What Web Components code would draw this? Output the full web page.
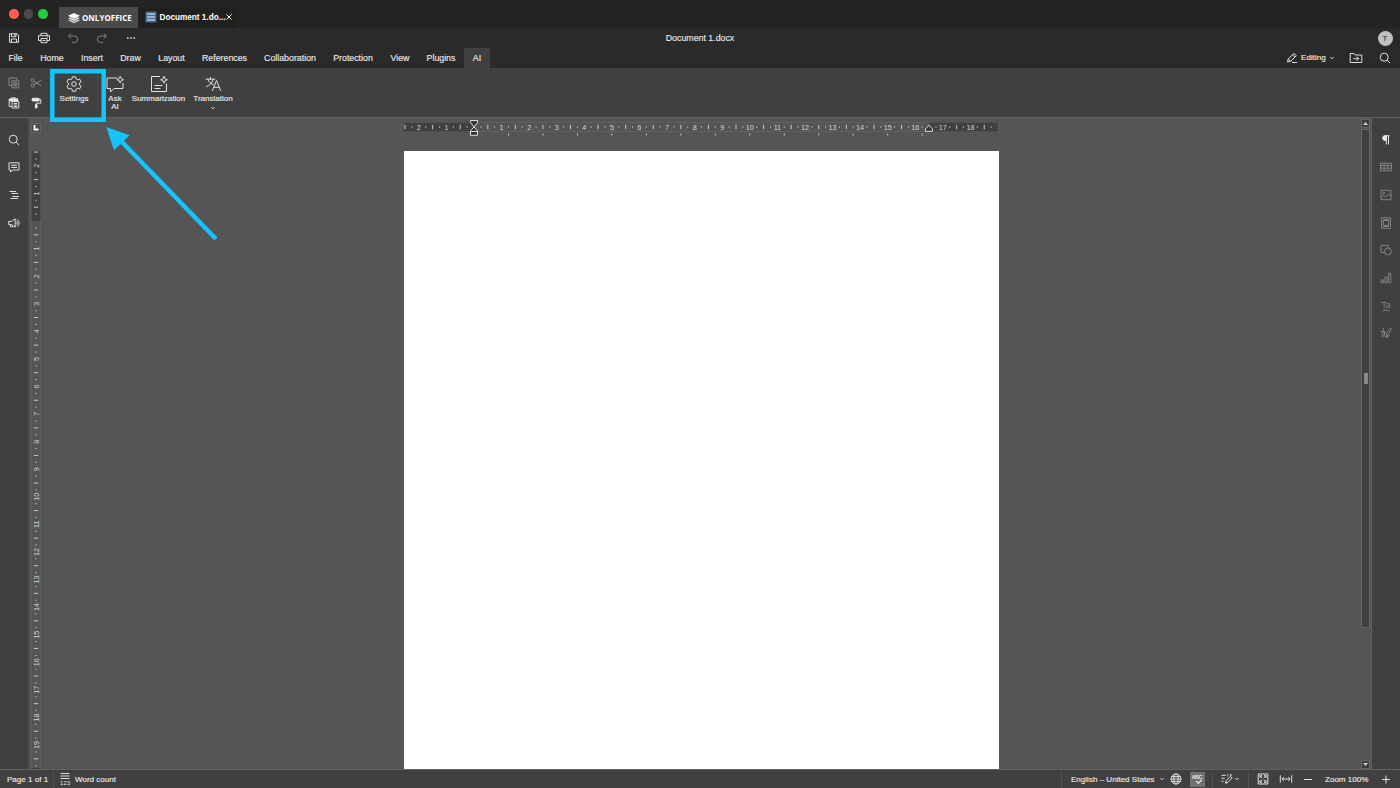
<!DOCTYPE html>
<html lang="en">
<head>
<meta charset="utf-8">
<title>Document 1.docx</title>
<style>
html, body {
  margin: 0;
  height: 100%;
  overflow: hidden;
}

body {
  --bar: #404040;
  --header: #2a2a2a;
  --canvas: #555555;
  --line: #616161;
  --text: #e8e8e8;
  --accent: #14c4fb;
  font-family: "Liberation Sans", Arial, sans-serif;
  font-size: 8.8px;
  color: var(--text);
  -webkit-text-stroke: .15px;
}
</style>
</head>
<body>
<de-app></de-app>
<script>
// every icon is drawn around its own centre, 1 unit = 1px
const icons = {
  save: '<path d="M-4-4.300H3L4.500-2.800V4.300H-4.500V-4.300ZM-2.500-4.300V-1.300H2V-4.300M-2.500 4.300V1H2.500V4.300M.7-3.800V-2"/>',
  print: '<path d="M-3-2.500V-4.700H3V-2.500M-3 2.500H-5.500V-2.300H5.500V2.500H3M-3 .5H3V4.700H-3ZM-1.500 2.500H1.500M3-.9H4"/>',
  undo: '<path d="M-1.800-4.500L-4.500-2L-1.800.5M-4.500-2H1.500A3.200 3.200 0 0 1 1.500 4.400H-1"/>',
  redo: '<path d="M1.800-4.500L4.500-2L1.800.5M4.500-2H-1.500A3.200 3.200 0 0 0-1.500 4.400H1"/>',
  dots: '<path d="M-4-.8h1.600v1.600h-1.600zM-.8-.8h1.600v1.600h-1.600zM2.400-.8h1.600v1.600h-1.600z" fill="currentColor" stroke="none"/>',
  copy: '<path d="M-2 2.500H-5V-5H3V-3"/><path d="M-2.200-2.200H4.800V4.800H-2.200Z"/><path d="M-.5-.5H3V3H-.5Z" fill="currentColor" opacity=".7"/>',
  cut: '<circle cx="-3.500" cy="-2.600" r="1.500"/><circle cx="-3.500" cy="2.600" r="1.500"/><path d="M-2.200-1.800L5.300 2.800M-2.200 1.800L5.300-2.800"/>',
  paste: '<path d="M-2.500 3.500H-4.800V-4H3.800V-2.300M-2.300-4V-5.200H1.300V-4"/><path d="M-4.500-4H3.500V-2H-4.500Z" fill="currentColor"/><path d="M-2-1.500H4.800V5H-2ZM-.3.500H3.200M-.3 2H3.200M-.3 3.500H3.200"/>',
  format: '<path d="M-3.500-4.700H3V-2H-3.500Z" fill="currentColor"/><path d="M3-3.400H4.800V.2H.2V1.500M-4.700-3.400H-3.500"/><path d="M-.6 1.500H1V5H-.6Z" fill="currentColor"/>',
  gear: '<path d="M-1.600-7.200H1.600L2-5.200L3.500-4.300L5.500-5L7.100-2.200L5.500-.9V.9L7.100 2.200L5.500 5L3.500 4.300L2 5.200L1.600 7.200H-1.600L-2 5.200L-3.500 4.300L-5.500 5L-7.100 2.200L-5.500.9V-.9L-7.100-2.200L-5.500-5L-3.500-4.300L-2-5.200Z" stroke-linejoin="round"/><circle r="2.300"/>',
  ask: '<path d="M2.500-6H-8V4.500H-4.500V8L-1 4.500H8V-1M5.200-7.700L6.200-5.300L8.500-4.300L6.200-3.300L5.200-1L4.200-3.300L1.900-4.300L4.200-5.300Z"/>',
  summary: '<path d="M1-7.500H-7.500V7.500H7.500V-.5M5-7.700L6-5.200L8.400-4.200L6-3.200L5-.8L4-3.200L1.600-4.200L4-5.200ZM-4.500 1.500H3.500M-4.500 4.500H1.500"/>',
  translate: '<path d="M-7.300-4.800H2.200M-2.500-7V-4.800M.2-4.800C-.7-1-3.500 1.500-7 2.800M-5-4.800C-4-1.700-2-.2.700.8M-.8 7L3.500-3.500L7.800 7M.8 3.300H6.200"/>',
  pencil: '<path d="M-4.500 4L-3.700.8L2-4.500L4.300-2.300L-1.300 3.300ZM-3.700.8L-1.300 3.300M.6-3.200L2.800-1M0 4.500H5"/>',
  chevron: '<path d="M-1.700-.9L0 .8L1.700-.9"/>',
  folder: '<path d="M-5.800 4.500V-4.500H-2L-.9-3H5.800V4.500ZM-2.700.7H2.600M.6-1.400L2.700.7L.6 2.800"/>',
  search: '<circle cx="-.8" cy="-.8" r="4"/><path d="M2.200 2.200L5.200 5.200"/>',
  comment: '<path d="M-5-4.200H5V3H-1L-3.500 5V3H-5ZM-2.800-1.700H3M-2.800.5H3"/>',
  headings: '<path d="M-4.500-3.500H2M-2.500-1.500H4M-1.500 1.500H5M-3.500 3.500H4"/>',
  speaker: '<path d="M-5.300-1.600H-2.500L1.200-4.200V4.200L-2.500 1.600H-5.300ZM-3.500 1.600V3.800H-1.500V2.200M2.700-1.600Q3.800 0 2.700 1.600M3.200-3.700Q7 0 3.200 3.700"/>',
  pilcrow: '<path d="M.2-4.500H-.8A2.500 2.500 0 0 0-.8.500H.2Z" fill="currentColor"/><path d="M.4 4.500V-4.300H3.500M2.500-4.300V4.500"/>',
  table: '<path d="M-5.500-3.800H5.500V3.800H-5.500ZM-5.500-1.500H5.500M-5.500 1.200H5.500M-1.800-3.800V3.800M1.800-3.800V3.800"/>',
  image: '<path d="M-5-4.700H5V4.700H-5ZM-5 2.500L-2.500.3L-.5 2.200L2.500-1L5 1.300"/><circle cx="-2.300" cy="-2" r=".8"/>',
  header: '<path d="M-4.500-5.300H4.500V5.300H-4.500ZM-2.600-3.500H2.600V3.500H-2.600ZM-2.600-2.500H2.600M-2.600 2.500H2.600"/>',
  shape: '<path d="M-1.800 2.500H-5V-4.700H2.300V-2"/><circle cx="1.800" cy="1.500" r="3.500"/>',
  chart: '<path d="M-4.800 1.800H-2.600V4.800H-4.800ZM-1.100-1H1.100V4.800H-1.100ZM2.600-4.700H4.800V4.800H2.600Z"/>',
  textart: '<text y="2" font-size="8.500">Ta</text><path d="M-3.500 5Q0 2.600 3.500 5"/>',
  sign: '<path d="M-5.500-1.500H-1M-3.500-5Q-1.500-5-3.300 0Q-4.800 5-2.800 3.500Q-1.500 2-1-1Q-2.300 4-.2 3.500M.2 4.300L1-.5L4-4.800L5.600-3.500L2.700.8ZM1 4.500L4 2"/>',
  count: '<path d="M-4.500-5.500H4.500M-4.500-3H4.500M-4.500-.5H4.500"/><text y="5.700" font-size="5.500" textLength="10">123</text>',
  globe: '<circle r="5"/><ellipse rx="2.200" ry="5"/><path d="M-5 0H5M-4.400-2.400H4.400M-4.400 2.400H4.400"/>',
  spell: '<text y="0" font-size="5.500" font-weight="bold" textLength="11">ABC</text><path d="M-.8 2L1.200 4.300L5 .8" stroke-width="1.200"/>',
  track: '<path d="M-5.500-3.700H-1M-5.500-.7H-2.300M-5.500 2.300H-3.500M-1.500 4L-.8 1.500L3.500-2.700L5.200-1L.8 3.400ZM-1.500 4L.8 3.400M.2-2.800L1.300-3.900L.5-4.700M3-4.700L4.500-3.500M4.500-4.700L3-3.500"/>',
  fitpage: '<path d="M-4.800-5H4.800V5H-4.800ZM-3-1.200V-3.300H-1M3-1.200V-3.300H1M-3 1.200V3.300H-1M3 1.200V3.300H1M-3-3.300L-.8-.8M3-3.300L.8-.8M-3 3.300L-.8.8M3 3.300L.8.8"/>',
  fitwidth: '<path d="M-5.700-3.700V3.700M5.700-3.700V3.700M-4 0H4M-2.200-1.900L-4.100 0L-2.200 1.900M2.200-1.900L4.100 0L2.200 1.900"/>',
  minus: '<path d="M-4 .5H4"/>',
  plus: '<path d="M-4 .5H4M0-3.500V4.500"/>',
  close: '<path d="M-2.600-2.600L2.600 2.600M-2.600 2.600L2.600-2.600"/>',
  logo: '<g fill="#fff" stroke="none"><path d="M-6-2.200L0-5L6-2.200L0 .7Z"/><path d="M-6 .2L-4-.8L0 1.200L4-.8L6 .2L0 3Z" opacity=".85"/><path d="M-6 2.400L-4 1.500L0 3.500L4 1.500L6 2.400L0 5.300Z" opacity=".7"/></g>',
  doc: '<path d="M-5.500-5.500H5.500V5.500H-5.500Z" fill="#446995" stroke="none"/><path d="M-4-3H4M-4 0H4M-4 3H4" stroke="#fff" stroke-width="1"/>',
};

class DeIcon extends HTMLElement {
  constructor() {
    super();
    this.attachShadow({ mode: 'open' });
  }

  connectedCallback() {
    this.shadowRoot.innerHTML = `
      <style>
      :host { display: block; flex: none; width: 18px; height: 18px; }
      svg { display: block; width: 100%; height: 100%; fill: none; stroke: currentColor; stroke-width: .95; }
      text { fill: currentColor; stroke: none; text-anchor: middle; }
      </style>
      <svg viewBox="-9 -9 18 18">${icons[this.getAttribute('name')]}</svg>`;
  }
}

const titleTemplate = document.createElement('template');
titleTemplate.innerHTML = `
<style>
:host {
  display: flex;
  height: 28px;
  flex: none;
  background: #242422;
  align-items: flex-end;
}

.lights {
  display: flex;
  gap: 5px;
  width: 50px;
  height: 28px;
  padding-left: 9px;
  align-items: center;
}

.lights i {
  width: 9.600px;
  height: 9.600px;
  border-radius: 50%;
  background: #ff5f57;
}

.lights i:nth-child(2) { background: #4b4b4a; }
.lights i:nth-child(3) { background: #28c840; }

.brand, .file {
  display: flex;
  align-items: center;
  height: 21px;
  box-sizing: border-box;
  white-space: nowrap;
  color: #fff;
  -webkit-text-stroke: 0;
}

.brand {
  width: 79px;
  margin-right: 1px;
  padding-left: 5.500px;
  background: #4a4a49;
  font: bold 8px "Open Sans", sans-serif;
}

.brand span { margin-left: -.5px; }

.file {
  width: 97px;
  padding: 0 0 1px 2.500px;
  background: #20201f;
  font-weight: bold;
  font-size: 8.200px;
}

.file span { width: 60.500px; }
</style>
<div class="lights"><i></i><i></i><i></i></div>
<div class="brand"><de-icon name="logo"></de-icon><span>ONLYOFFICE</span></div>
<div class="file"><de-icon name="doc"></de-icon><span>Document 1.do...</span><de-icon name="close"></de-icon></div>
`;

class DeTitle extends HTMLElement {
  constructor() {
    super();
    this.attachShadow({ mode: 'open' }).appendChild(titleTemplate.content.cloneNode(true));
  }
}

const headerTemplate = document.createElement('template');
headerTemplate.innerHTML = `
<style>
:host {
  display: block;
  flex: none;
  height: 40px;
  background: var(--header);
}

.quick {
  display: grid;
  grid-template-columns: 1fr auto 1fr;
  height: 20px;
  align-items: center;
}

.quick div { display: flex; padding-left: 5px; }
.quick div de-icon { margin-right: 11.600px; }
.quick .off { color: #858585; }

.user {
  justify-self: end;
  margin-right: 7.500px;
  width: 15px;
  height: 15px;
  border-radius: 50%;
  background: #c0c0c0;
  color: #333;
  font-size: 7px;
  line-height: 15px;
  text-align: center;
}

.menu { display: flex; height: 20px; line-height: 20px; }
.menu span { text-align: center; }
.menu .on { background: var(--bar); }

.right {
  display: flex;
  align-items: center;
  margin-left: auto;
  padding-right: 6px;
  font-size: 8.100px;
}
</style>
<div class="quick">
  <div>
    <de-icon name="save"></de-icon><de-icon name="print"></de-icon><de-icon class="off" name="undo"></de-icon><de-icon class="off" name="redo" style="margin-left:-1px"></de-icon><de-icon name="dots"></de-icon>
  </div>
  <span>Document 1.docx</span>
  <span class="user">T</span>
</div>
<div class="menu">
  <span style="width:31px">File</span>
  <span style="width:42px">Home</span>
  <span style="width:38px">Insert</span>
  <span style="width:39px">Draw</span>
  <span style="width:43px">Layout</span>
  <span style="width:63px">References</span>
  <span style="width:68px">Collaboration</span>
  <span style="width:58px">Protection</span>
  <span style="width:36px">View</span>
  <span style="width:46px">Plugins</span>
  <span style="width:26px" class="on">AI</span>
  <div class="right">
    <de-icon name="pencil"></de-icon><span style="width:24px">Editing</span><de-icon name="chevron" style="margin-left:-2px"></de-icon>
    <de-icon name="folder" style="margin:0 11px 0 6px"></de-icon><de-icon name="search"></de-icon>
  </div>
</div>
`;

class DeHeader extends HTMLElement {
  constructor() {
    super();
    this.attachShadow({ mode: 'open' }).appendChild(headerTemplate.content.cloneNode(true));
  }
}

// big ribbon button: icon above, slotted caption below
class DeButton extends HTMLElement {
  constructor() {
    super();
    this.attachShadow({ mode: 'open' });
  }

  connectedCallback() {
    this.shadowRoot.innerHTML = `
      <style>
      :host {
        display: flex;
        flex-direction: column;
        align-items: center;
        padding-top: 7px;
        font-size: 8px;
        line-height: 8px;
        text-align: center;
      }
      .caption { margin-top: 2px; white-space: nowrap; }
      </style>
      <de-icon name="${this.getAttribute('icon')}"></de-icon>
      <div class="caption"><slot></slot></div>`;
  }
}

const toolbarTemplate = document.createElement('template');
toolbarTemplate.innerHTML = `
<style>
:host {
  display: flex;
  flex: none;
  height: 50px;
  box-sizing: border-box;
  border-bottom: 1px solid var(--line);
  background: var(--bar);
}

.clip {
  display: grid;
  grid-template-columns: 22px 22px;
  grid-auto-rows: 20px;
  width: 43px;
  padding: 5px 0 0 5px;
  align-items: center;
}

.clip .off { color: #8a8a8a; }
.sep { width: 1px; height: 38px; margin: 5px 4.500px 0 -3px; background: #4c4c4c; }
</style>
<div class="clip">
  <de-icon class="off" name="copy"></de-icon><de-icon class="off" name="cut"></de-icon>
  <de-icon name="paste"></de-icon><de-icon name="format"></de-icon>
</div>
<de-button icon="gear" style="width:52px">Settings</de-button>
<i class="sep"></i>
<de-button icon="ask" style="width:25px">Ask<br>AI</de-button>
<de-button icon="summary" style="width:62px">Summarization</de-button>
<de-button icon="translate" style="width:47px">Translation<de-icon name="chevron" style="margin:-4px auto"></de-icon></de-button>
`;

class DeToolbar extends HTMLElement {
  constructor() {
    super();
    this.attachShadow({ mode: 'open' }).appendChild(toolbarTemplate.content.cloneNode(true));
  }
}

class DeSide extends HTMLElement {
  constructor() {
    super();
    this.attachShadow({ mode: 'open' });
    this.shadowRoot.innerHTML = `
      <style>
      :host {
        display: flex;
        flex-direction: column;
        flex: none;
        box-sizing: border-box;
        width: 28px;
        padding: 12.500px 0 0 5px;
        gap: 9.700px;
        background: var(--bar);
      }
      </style>
      <slot></slot>`;
  }
}

const CM = 27.58;

/**
 * Ruler in centimetres. Attributes: length, zero (px of the 0 mark),
 * end (px where the right margin starts), vertical
 */
class DeRuler extends HTMLElement {
  constructor() {
    super();
    this.attachShadow({ mode: 'open' });
  }

  connectedCallback() {
    const vertical = this.hasAttribute('vertical');
    const length = Number(this.getAttribute('length'));
    const zero = Number(this.getAttribute('zero'));
    const end = Number(this.getAttribute('end'));
    // the vertical ruler is the same drawing with its axes swapped
    const flip = vertical ? ' scale(-1 1)' : '';
    let marks = '';

    for (let q = -10; q < 90; q += 1) {
      const x = zero + (q * CM) / 4;
      if (x > 0 && x < length - 2 && q !== 0) {
        if (q % 4 === 0) {
          marks += `<text transform="translate(${x} 7.500)${flip}">${Math.abs(q / 4)}</text>`;
        } else if (q % 2 === 0) {
          marks += `<path d="M${x} 2.800V7.200"/>`;
        } else {
          marks += `<path d="M${x} 4.300V5.700"/>`;
        }
      }
    }

    // default tab stops, every 1.25 cm
    if (!vertical) {
      for (let x = zero + CM * 1.25; x < end; x += CM * 1.25) {
        marks += `<path d="M${x} 11.500V13.500"/>`;
      }
      marks += `
        <g fill="#333" stroke="#ddd">
          <path d="M${zero - 3.5}-1.500H${zero + 3.5}V.500L${zero} 5L${zero - 3.5}.500ZM${zero} 5L${zero + 3.5} 8.700V13.300H${zero - 3.5}V8.700ZM${zero - 3.5} 9.500H${zero + 3.5}"/>
          <path d="M${end} 3.300L${end + 3.5} 7V9.300H${end - 3.5}V7Z"/>
        </g>`;
    }

    this.shadowRoot.innerHTML = `
      <style>
      :host { display: block; flex: none; }
      svg { display: block; overflow: visible; fill: none; stroke: #c6c6c6; stroke-width: 1; }
      text { fill: #d4d4d4; stroke: none; font-size: 7.200px; text-anchor: middle; }
      </style>
      <svg width="${vertical ? 10 : length}" height="${vertical ? length : 15}">
        <g${vertical ? ' transform="matrix(0 1 1 0 0 0)"' : ''}>
          <path d="M.5.500H${length - 0.5}V9.500H.5Z" fill="#555" stroke="#606060"/>
          <path d="M0 .5H${zero}V9.500H0Z" fill="#404040" stroke="none"/>
          <path d="M${end} .5H${length - 1}V9.500H${end}Z" fill="#404040" stroke="none"/>
          ${marks}
        </g>
      </svg>`;
  }
}

const scrollTemplate = document.createElement('template');
scrollTemplate.innerHTML = `
<style>
:host {
  display: flex;
  flex-direction: column;
  flex: none;
  box-sizing: border-box;
  width: 11px;
  padding: 1px 1px 0 0;
  border-right: 1px solid var(--line);
}

div {
  box-sizing: border-box;
  height: 9px;
  border: 1px solid #666;
  background: var(--bar);
}

.track {
  display: flex;
  height: 499px;
  margin: 1px 0 132px;
  align-items: center;
  justify-content: center;
}

.track i { width: 4px; height: 11px; background: #888; }
svg { display: block; width: 7px; height: 7px; fill: #ccc; }
</style>
<div><svg viewBox="0 0 7 7"><path d="M1 5L3.500 2L6 5Z"/></svg></div>
<div class="track"><i></i></div>
<div><svg viewBox="0 0 7 7"><path d="M1 2L3.500 5L6 2Z"/></svg></div>
`;

class DeScroll extends HTMLElement {
  constructor() {
    super();
    this.attachShadow({ mode: 'open' }).appendChild(scrollTemplate.content.cloneNode(true));
  }
}

const statusTemplate = document.createElement('template');
statusTemplate.innerHTML = `
<style>
:host {
  display: flex;
  flex: none;
  box-sizing: border-box;
  height: 19px;
  border-top: 1px solid var(--line);
  background: var(--bar);
  align-items: center;
  font-size: 8.050px;
  white-space: nowrap;
}

.sep { width: 1px; height: 18px; background: #505050; }
.lang { margin-left: auto; }
.on { background: #707070; width: 15px; height: 15px; display: flex; justify-content: center; align-items: center; }
</style>
<span style="width:46px;padding-left:7px">Page 1 of 1</span>
<i class="sep"></i>
<de-icon name="count" style="margin:0 1px 0 2px"></de-icon><span>Word count</span>
<i class="sep lang"></i>
<span style="width:82.500px;margin-left:9px">English – United States</span>
<de-icon name="chevron" style="margin-left:-1px"></de-icon>
<de-icon name="globe" style="margin:0 5px 0 -4px"></de-icon>
<span class="on"><de-icon name="spell"></de-icon></span>
<i class="sep" style="margin-left:7px"></i>
<de-icon name="track" style="margin-left:5px"></de-icon>
<de-icon name="chevron" style="margin-left:-8px"></de-icon>
<i class="sep" style="margin-left:2px"></i>
<de-icon name="fitpage" style="margin-left:5.500px"></de-icon>
<de-icon name="fitwidth" style="margin-left:5px"></de-icon>
<de-icon name="minus" style="margin-left:4px"></de-icon>
<span style="width:44px;margin:0 8px">Zoom 100%</span>
<de-icon name="plus" style="margin-right:5px"></de-icon>
`;

class DeStatus extends HTMLElement {
  constructor() {
    super();
    this.attachShadow({ mode: 'open' }).appendChild(statusTemplate.content.cloneNode(true));
  }
}

const appTemplate = document.createElement('template');
appTemplate.innerHTML = `
<style>
:host {
  display: flex;
  flex-direction: column;
  position: relative;
  height: 100vh;
  background: var(--canvas);
}

main { display: flex; flex: 1; min-height: 0; overflow: hidden; }
.left { border-right: 1px solid #4b4b4b; width: 29px; }
.right { color: #858585; }
.right de-icon:first-child { color: var(--text); }

.gutter { width: 10px; margin-left: 2px; padding-top: 5px; }
.corner { display: block; width: 8px; height: 8px; border: 1px solid #626262; margin-bottom: 18px; background: #4b4b4b; }

.sheet {
  display: flex;
  flex-direction: column;
  width: 595px;
  margin: 4px auto 0 363px;
}

.page { flex: 1; margin-top: 14px; background: #fff; }

/* callout over the Settings button */
.callout {
  position: absolute;
  left: 0;
  top: 0;
  width: 240px;
  height: 250px;
  fill: none;
  stroke: var(--accent);
}
</style>
<de-title></de-title>
<de-header></de-header>
<de-toolbar></de-toolbar>
<main>
  <de-side class="left">
    <de-icon name="search"></de-icon>
    <de-icon name="comment"></de-icon>
    <de-icon name="headings"></de-icon>
    <de-icon name="speaker"></de-icon>
  </de-side>
  <div class="gutter">
    <svg class="corner" viewBox="0 0 8 8"><path d="M2.500 1V5.500H6.500" fill="none" stroke="#fff" stroke-width="1.800"/></svg>
    <de-ruler vertical length="618" zero="70" end="618"></de-ruler>
  </div>
  <div class="sheet">
    <de-ruler length="595" zero="70" end="525"></de-ruler>
    <div class="page"></div>
  </div>
  <de-scroll></de-scroll>
  <de-side class="right">
    <de-icon name="pilcrow"></de-icon>
    <de-icon name="table"></de-icon>
    <de-icon name="image"></de-icon>
    <de-icon name="header"></de-icon>
    <de-icon name="shape"></de-icon>
    <de-icon name="chart"></de-icon>
    <de-icon name="textart"></de-icon>
    <de-icon name="sign"></de-icon>
  </de-side>
</main>
<de-status></de-status>
<svg class="callout" viewBox="0 0 240 250">
  <path d="M52.300 71.200H103.700V119.700H52.300Z" stroke-width="4.500"/>
  <path d="M121 141L216 239" stroke-width="4.500"/>
  <path d="M106.300 127L129.700 135.300L114 150.300Z" fill="#14c4fb" stroke="none"/>
</svg>
`;

class DeApp extends HTMLElement {
  constructor() {
    super();
    this.attachShadow({ mode: 'open' }).appendChild(appTemplate.content.cloneNode(true));
  }
}

window.customElements.define('de-icon', DeIcon);
window.customElements.define('de-title', DeTitle);
window.customElements.define('de-header', DeHeader);
window.customElements.define('de-button', DeButton);
window.customElements.define('de-toolbar', DeToolbar);
window.customElements.define('de-side', DeSide);
window.customElements.define('de-ruler', DeRuler);
window.customElements.define('de-scroll', DeScroll);
window.customElements.define('de-status', DeStatus);
window.customElements.define('de-app', DeApp);
</script>
</body>
</html>
